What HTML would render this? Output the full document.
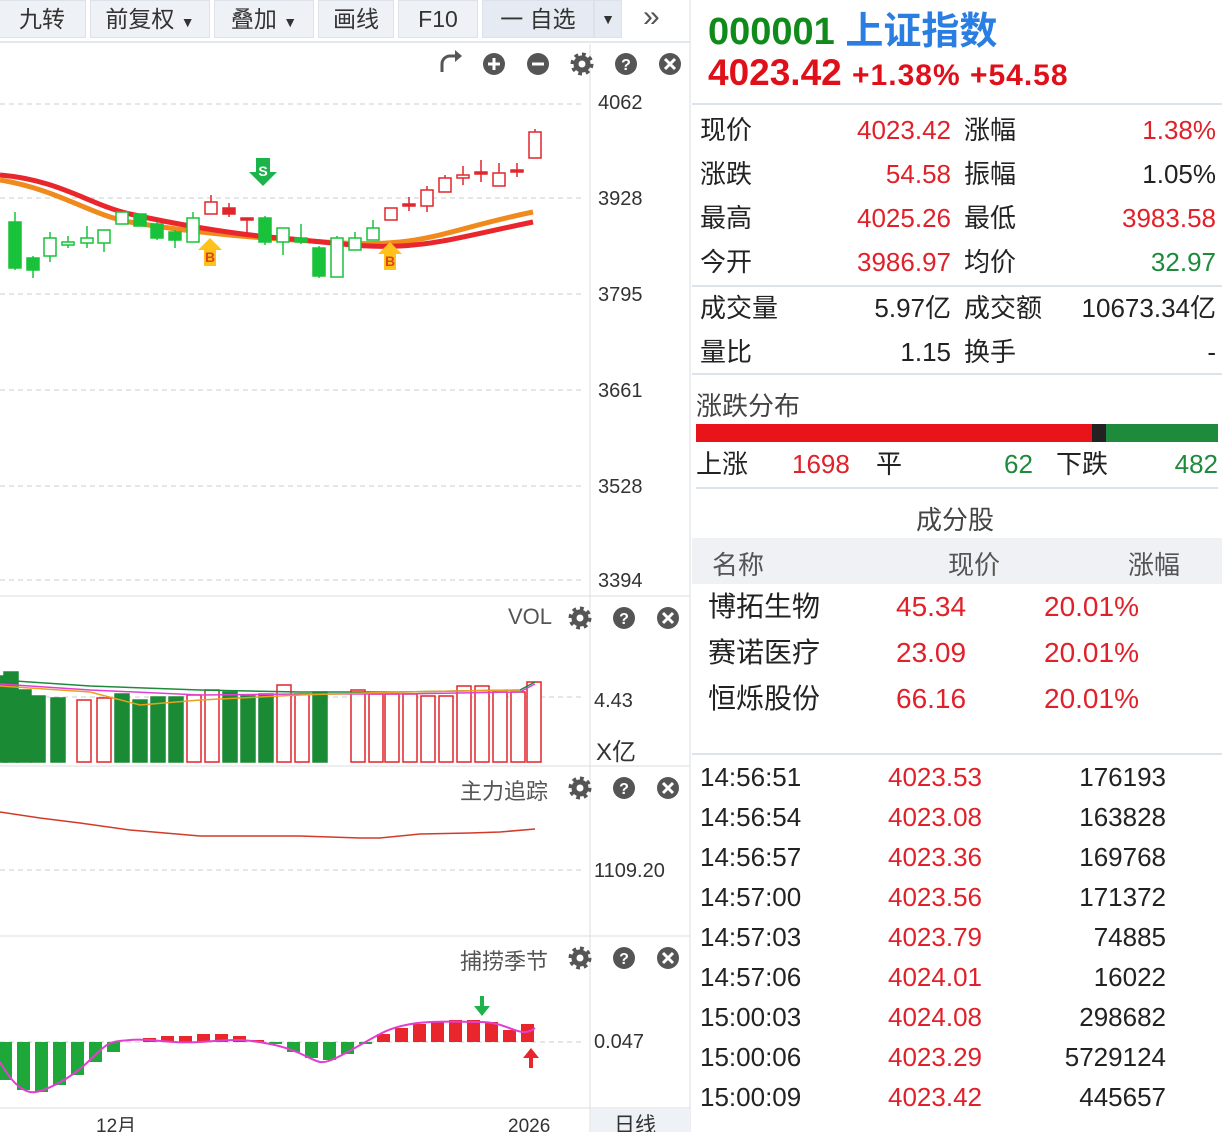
<!DOCTYPE html>
<html><head><meta charset="utf-8">
<style>
*{margin:0;padding:0;box-sizing:border-box}
body{width:1222px;height:1132px;overflow:hidden;background:#fff;font-family:"Liberation Sans","Noto Sans CJK SC",sans-serif;position:relative;color:#222}
.a{position:absolute;white-space:nowrap}
.tb{position:absolute;top:0;height:38px;background:#eef1f5;border:1px solid #dde2ea;font-size:23px;color:#333;line-height:36px;text-align:center}
.r{color:#e0212a}.g{color:#1e8a3c}
.row{position:absolute;left:700px;width:516px;height:44px;font-size:26px;line-height:44px}
.row span{position:absolute}
.hl{position:absolute;left:692px;width:530px;height:2px;background:#dde3ec}
.tr{position:absolute;left:700px;font-size:26px;line-height:40px;width:470px;height:40px}
.tr span{position:absolute}
.ax{position:absolute;left:598px;font-size:20px;color:#333}
</style></head><body>
<div class="tb" style="left:-2px;width:88px">九转</div>
<div class="tb" style="left:90px;width:120px">前复权 <span style="font-size:14px">▼</span></div>
<div class="tb" style="left:214px;width:100px">叠加 <span style="font-size:14px">▼</span></div>
<div class="tb" style="left:318px;width:76px">画线</div>
<div class="tb" style="left:398px;width:80px">F10</div>
<div class="tb" style="left:482px;width:112px;background:#e6ebf3">一 自选</div>
<div class="tb" style="left:594px;width:28px;background:#e6ebf3;font-size:14px">▼</div>
<div class="a" style="left:643px;top:0;font-size:30px;color:#555">»</div>
<div class="a" style="left:0;top:41px;width:690px;height:2px;background:#e3e7ee"></div>

<svg class="a" style="left:0;top:0" width="692" height="1132">
 <g stroke="#d8dce2" stroke-width="1">
  <line x1="590" y1="44" x2="590" y2="1132"/>
  <line x1="690" y1="0" x2="690" y2="1132"/>
  <line x1="0" y1="596" x2="690" y2="596"/>
  <line x1="0" y1="766" x2="690" y2="766"/>
  <line x1="0" y1="936" x2="690" y2="936"/>
  <line x1="0" y1="1108" x2="690" y2="1108"/>
 </g>
 <g stroke="#ccc" stroke-dasharray="5,4">
  <line x1="0" y1="104" x2="585" y2="104"/><line x1="0" y1="198" x2="585" y2="198"/>
  <line x1="0" y1="294" x2="585" y2="294"/><line x1="0" y1="390" x2="585" y2="390"/>
  <line x1="0" y1="486" x2="585" y2="486"/><line x1="0" y1="580" x2="585" y2="580"/>
  <line x1="0" y1="697" x2="585" y2="697"/><line x1="0" y1="870" x2="585" y2="870"/>
  <line x1="0" y1="1042" x2="585" y2="1042"/>
 </g>
 <g fill="#555">
  <path d="M442 72 v-8 a8 8 0 0 1 8-8 h8" stroke="#555" stroke-width="3" fill="none"/><path d="M455 50 l7 6 -7 6z"/>
  <circle cx="494" cy="64" r="11"/><circle cx="538" cy="64" r="11"/>
  <circle cx="626" cy="64" r="11"/><circle cx="670" cy="64" r="11"/>
  <circle cx="624" cy="618" r="11"/><circle cx="668" cy="618" r="11"/>
  <circle cx="624" cy="788" r="11"/><circle cx="668" cy="788" r="11"/>
  <circle cx="624" cy="958" r="11"/><circle cx="668" cy="958" r="11"/>
 </g>
 <g fill="none" stroke="#555">
  <circle cx="582" cy="64" r="6" stroke-width="5"/><circle cx="582" cy="64" r="9.5" stroke-width="4" stroke-dasharray="3.7,3.7"/>
  <circle cx="580" cy="618" r="6" stroke-width="5"/><circle cx="580" cy="618" r="9.5" stroke-width="4" stroke-dasharray="3.7,3.7"/>
  <circle cx="580" cy="788" r="6" stroke-width="5"/><circle cx="580" cy="788" r="9.5" stroke-width="4" stroke-dasharray="3.7,3.7"/>
  <circle cx="580" cy="958" r="6" stroke-width="5"/><circle cx="580" cy="958" r="9.5" stroke-width="4" stroke-dasharray="3.7,3.7"/>
 </g>
 <g stroke="#fff" stroke-width="3">
  <path d="M488 64h12M494 58v12M532 64h12"/>
  <path d="M665 59l10 10M675 59l-10 10M663 613l10 10M673 613l-10 10M663 783l10 10M673 783l-10 10M663 953l10 10M673 953l-10 10"/>
 </g>
 <g fill="#fff" font-size="16" font-weight="bold" text-anchor="middle" font-family="Liberation Sans">
  <text x="626" y="70">?</text><text x="624" y="624">?</text><text x="624" y="794">?</text><text x="624" y="964">?</text>
 </g>
 <path d="M0 180 C60 190 90 215 130 222 S230 236 280 239 S360 246 400 242 S470 225 533 212" stroke="#f08a1c" stroke-width="5" fill="none"/>
 <path d="M0 175 C60 180 90 205 130 214 S230 234 280 238 S360 248 400 246 S470 235 533 222" stroke="#e8262c" stroke-width="5" fill="none"/>
 <g id="candles"></g>
 <path d="M256 158h14v14h7l-14 14-14-14h7z" fill="#1bb34a"/><text x="263" y="176" fill="#fff" font-size="14" font-weight="bold" text-anchor="middle">S</text>
 <path d="M210 238l12 12h-6v16h-12v-16h-6z" fill="#ffc21a"/><text x="210" y="262" fill="#e0421a" font-size="14" font-weight="bold" text-anchor="middle">B</text>
 <path d="M390 242l12 12h-6v16h-12v-16h-6z" fill="#ffc21a"/><text x="390" y="266" fill="#e0421a" font-size="14" font-weight="bold" text-anchor="middle">B</text>
 <g id="vol"></g>
 <path d="M0 680 L90 686 L200 690 L300 692 L400 692 L520 690 L535 682" stroke="#1e8a3c" fill="none" stroke-width="1.5"/>
 <path d="M0 684 L90 690 L200 695 L300 694 L400 694 L520 692 L535 684" stroke="#e040d0" fill="none" stroke-width="1.5"/>
 <path d="M0 686 L90 692 L140 705 L200 700 L300 695 L400 692 L520 690" stroke="#e8a020" fill="none" stroke-width="1.5"/>
 <path d="M0 812 L40 818 L80 823 L130 830 L200 836 L300 836 L360 838 L380 838 L420 834 L470 833 L500 832 L535 829" stroke="#d23a2a" fill="none" stroke-width="1.5"/>
 <g id="season"></g>
 <path d="M0 1062 C10 1080 20 1090 30 1092 S70 1080 90 1060 S110 1042 130 1040 S170 1044 200 1042 S240 1038 270 1044 S310 1060 320 1062 S350 1050 380 1034 S450 1022 480 1022 S520 1040 535 1028" stroke="#e040d0" fill="none" stroke-width="2"/>
 <path d="M480 996v10h-6l8 10 8-10h-6v-10z" fill="#1bb34a"/>
 <path d="M533 1068v-10h6l-8-10-8 10h6v10z" fill="#e8262c"/>
 <text x="96" y="1132" font-size="19" fill="#333">12月</text><text x="508" y="1132" font-size="19" fill="#333">2026</text>
 <rect x="591" y="1109" width="99" height="23" fill="#eef1f5"/><text x="614" y="1132" font-size="21" fill="#333">日线</text>
</svg>
<div class="ax" style="top:92px">4062</div><div class="ax" style="top:188px">3928</div>
<div class="ax" style="top:284px">3795</div><div class="ax" style="top:380px">3661</div>
<div class="ax" style="top:476px">3528</div><div class="ax" style="top:570px">3394</div>
<div class="ax" style="top:690px;left:594px">4.43</div><div class="ax" style="top:732px;left:596px;font-size:24px">X亿</div>
<div class="ax" style="top:860px;left:594px">1109.20</div><div class="ax" style="top:1031px;left:594px">0.047</div>
<div class="a" style="left:508px;top:604px;font-size:22px;color:#555">VOL</div>
<div class="a" style="left:460px;top:774px;font-size:22px;color:#555">主力追踪</div>
<div class="a" style="left:460px;top:944px;font-size:22px;color:#555">捕捞季节</div>

<div class="a" style="left:708px;top:0px;font-size:38px;font-weight:bold"><span style="color:#118a1c">000001</span> <span style="color:#2a7de1">上证指数</span></div>
<div class="a" style="left:708px;top:52px;font-size:37px;font-weight:bold;color:#e0101a">4023.42 <span style="font-size:30px;letter-spacing:1px">+1.38% +54.58</span></div>
<div class="hl" style="top:103px"></div>
<div class="row" style="top:108px"><span style="left:0">现价</span><span class="r" style="right:265px">4023.42</span><span style="left:264px">涨幅</span><span class="r" style="right:0">1.38%</span></div>
<div class="row" style="top:152px"><span style="left:0">涨跌</span><span class="r" style="right:265px">54.58</span><span style="left:264px">振幅</span><span style="right:0">1.05%</span></div>
<div class="row" style="top:196px"><span style="left:0">最高</span><span class="r" style="right:265px">4025.26</span><span style="left:264px">最低</span><span class="r" style="right:0">3983.58</span></div>
<div class="row" style="top:240px"><span style="left:0">今开</span><span class="r" style="right:265px">3986.97</span><span style="left:264px">均价</span><span class="g" style="right:0">32.97</span></div>
<div class="hl" style="top:285px"></div>
<div class="row" style="top:286px"><span style="left:0">成交量</span><span style="right:265px">5.97亿</span><span style="left:264px">成交额</span><span style="right:0">10673.34亿</span></div>
<div class="row" style="top:330px"><span style="left:0">量比</span><span style="right:265px">1.15</span><span style="left:264px">换手</span><span style="right:0">-</span></div>
<div class="hl" style="top:373px"></div>
<div class="a" style="left:696px;top:386px;font-size:26px;color:#444">涨跌分布</div>
<div class="a" style="left:696px;top:424px;width:396px;height:18px;background:#e8141a"></div>
<div class="a" style="left:1092px;top:424px;width:14px;height:18px;background:#222"></div>
<div class="a" style="left:1106px;top:424px;width:112px;height:18px;background:#1e8a3c"></div>
<div class="row" style="top:442px;left:696px;width:522px"><span style="left:0">上涨</span><span class="r" style="left:96px">1698</span><span style="left:180px">平</span><span class="g" style="left:308px">62</span><span style="left:360px">下跌</span><span class="g" style="right:0">482</span></div>
<div class="hl" style="top:487px;left:696px;width:522px"></div>
<div class="a" style="left:916px;top:500px;font-size:26px;color:#444">成分股</div>
<div class="a" style="left:692px;top:538px;width:530px;height:46px;background:#eff1f4"></div>
<div class="a" style="left:712px;top:545px;font-size:26px;color:#555">名称</div>
<div class="a" style="left:948px;top:545px;font-size:26px;color:#555">现价</div>
<div class="a" style="left:1128px;top:545px;font-size:26px;color:#555">涨幅</div>
<div class="a" style="left:708px;top:584px;font-size:28px;line-height:46px">博拓生物<br>赛诺医疗<br>恒烁股份</div>
<div class="a r" style="left:896px;top:584px;font-size:28px;line-height:46px">45.34<br>23.09<br>66.16</div>
<div class="a r" style="left:1044px;top:584px;font-size:28px;line-height:46px">20.01%<br>20.01%<br>20.01%</div>
<div class="hl" style="top:753px"></div>
<div id="trades"></div>
<script>
var C=[[15,222,268,212,270,'gf'],[33,258,270,256,278,'gf'],[50,238,256,232,262,'gh'],[68,242,245,236,248,'gh'],[87,238,243,226,248,'gh'],[104,230,243,230,252,'gh'],[122,212,224,212,224,'gh'],[140,214,226,214,226,'gf'],[157,224,238,222,240,'gf'],[175,232,240,230,248,'gf'],[193,218,242,212,242,'gh'],[211,202,214,195,214,'rh'],[229,208,214,203,217,'rf'],[247,218,220,218,233,'rf'],[265,218,242,216,245,'gf'],[283,228,242,228,255,'gh'],[301,238,242,224,244,'gf'],[319,248,276,246,278,'gf'],[337,238,277,236,277,'gh'],[355,238,250,232,250,'gh'],[373,228,240,220,240,'gh'],[391,208,220,208,220,'rh'],[409,204,206,197,211,'rf'],[427,190,206,186,212,'rh'],[445,178,192,175,192,'rh'],[463,175,178,166,185,'rh'],[481,172,174,160,182,'rf'],[499,173,186,163,186,'rh'],[517,170,172,163,177,'rf'],[535,132,158,129,158,'rh']];
var s='';C.forEach(function(c){var col=c[5][0]=='g'?'#18c23a':'#e0262c';var f=c[5][1]=='f'?col:'#fff';
s+='<line x1="'+c[0]+'" y1="'+c[3]+'" x2="'+c[0]+'" y2="'+c[4]+'" stroke="'+col+'" stroke-width="1.5"/>';
s+='<rect x="'+(c[0]-6)+'" y="'+c[1]+'" width="12" height="'+Math.max(2,c[2]-c[1])+'" fill="'+f+'" stroke="'+col+'" stroke-width="1.5"/>';});
document.getElementById('candles').innerHTML=s;
var V=[[0,676,'g'],[11,672,'g'],[24,690,'g'],[38,696,'g'],[58,698,'g'],[84,700,'r'],[104,698,'r'],[122,694,'g'],[140,700,'g'],[158,697,'g'],[176,697,'g'],[194,695,'r'],[212,690,'r'],[230,692,'g'],[248,696,'g'],[266,694,'g'],[284,685,'r'],[302,694,'r'],[320,692,'g'],[358,690,'r'],[376,694,'r'],[392,694,'r'],[410,694,'r'],[428,696,'r'],[446,696,'r'],[464,686,'r'],[482,686,'r'],[500,692,'r'],[518,692,'r'],[534,682,'r']];
s='';V.forEach(function(v){var g=v[2]=='g';s+='<rect x="'+(v[0]-7+ (v[0]==0?7:0))+'" y="'+v[1]+'" width="'+(v[0]==0?7:14)+'" height="'+(762-v[1])+'" fill="'+(g?'#1b8a34':'#fff')+'" stroke="'+(g?'#1b8a34':'#e0262c')+'" stroke-width="1.5"/>';});
document.getElementById('vol').innerHTML=s;
var S=[[5,1080],[23,1090],[41,1092],[59,1085],[77,1075],[95,1062],[113,1052],[131,1042],[149,1038],[167,1036],[185,1036],[203,1034],[221,1034],[239,1036],[257,1040],[275,1044],[293,1052],[311,1058],[329,1060],[347,1054],[365,1044],[383,1034],[401,1028],[419,1024],[437,1022],[455,1020],[473,1020],[491,1022],[509,1030],[527,1024]];
s='';S.forEach(function(p){var y=p[1],up=y<1042;s+='<rect x="'+(p[0]-6)+'" y="'+(up?y:1042)+'" width="13" height="'+Math.abs(y-1042)+'" fill="'+(up?'#e8262c':'#1ea83a')+'"/>';});
document.getElementById('season').innerHTML=s;
var T=[['14:56:51','4023.53','176193'],['14:56:54','4023.08','163828'],['14:56:57','4023.36','169768'],['14:57:00','4023.56','171372'],['14:57:03','4023.79','74885'],['14:57:06','4024.01','16022'],['15:00:03','4024.08','298682'],['15:00:06','4023.29','5729124'],['15:00:09','4023.42','445657']];
s='';T.forEach(function(t,i){s+='<div class="tr" style="top:'+(757+i*40)+'px"><span style="left:0">'+t[0]+'</span><span class="r" style="left:188px">'+t[1]+'</span><span style="right:4px">'+t[2]+'</span></div>';});
document.getElementById('trades').innerHTML=s;
</script>
</body></html>
